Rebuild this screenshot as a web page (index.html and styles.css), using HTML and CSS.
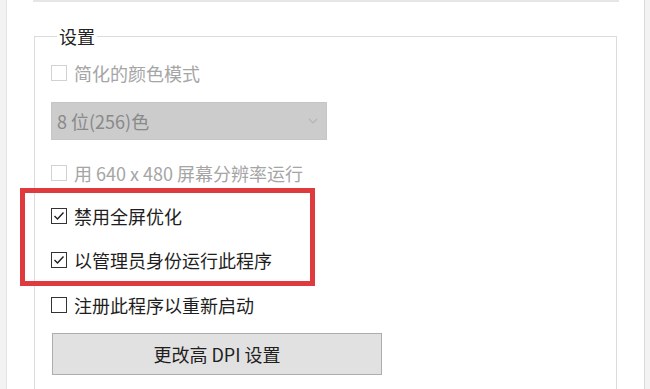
FILE: index.html
```html
<!DOCTYPE html>
<html lang="zh-CN">
<head>
<meta charset="utf-8">
<title>设置</title>
<link rel="stylesheet" href="styles.css">
</head>
<body>
<div class="window">
  <div class="prev-group"></div>
  <fieldset class="group">
    <legend class="group-title">设置</legend>

    <div class="row row-first disabled">
      <span class="box"></span>
      <span class="label">简化的颜色模式</span>
    </div>

    <div class="select">
      <span class="select-text">8 位(256)色</span>
      <svg class="chevron" width="10" height="6" viewBox="0 0 10 6"><path d="M1 1 L5 5 L9 1" fill="none" stroke="#b4b4b4" stroke-width="1.2"/></svg>
    </div>

    <div class="row row-res disabled">
      <span class="box"></span>
      <span class="label">用 640 x 480 屏幕分辨率运行</span>
    </div>

    <div class="highlight">
      <div class="row">
        <span class="box checked"><svg width="14" height="14" viewBox="0 0 14 14"><path d="M2.5 7 L5.5 10 L11.5 3.5" fill="none" stroke="#1e1e1e" stroke-width="1.4"/></svg></span>
        <span class="label">禁用全屏优化</span>
      </div>
      <div class="row row-second">
        <span class="box checked"><svg width="14" height="14" viewBox="0 0 14 14"><path d="M2.5 7 L5.5 10 L11.5 3.5" fill="none" stroke="#1e1e1e" stroke-width="1.4"/></svg></span>
        <span class="label">以管理员身份运行此程序</span>
      </div>
    </div>

    <div class="row row-restart">
      <span class="box"></span>
      <span class="label">注册此程序以重新启动</span>
    </div>

    <button class="dpi-button" type="button">更改高 DPI 设置</button>
  </fieldset>
</div>
</body>
</html>
```

FILE: styles.css
```css
html, body {
  margin: 0;
  padding: 0;
  height: 100%;
}

body {
  background: #f3f3f3;
  font-family: "Noto Sans CJK SC", "Microsoft YaHei", "Noto Sans", sans-serif;
  color: #1e1e1e;
  overflow: hidden;
}

.window {
  margin: 0 5px 0 6px;
  min-height: 100%;
  box-sizing: border-box;
  background: #ffffff;
  border-left: 1px solid #e4e4e4;
  border-right: 1px solid #dadada;
  padding: 0 27px 0 27px;
}

.prev-group {
  height: 0;
  border-bottom: 2px solid #e6e6e6;
  margin-right: -2px;
  margin-left: -1px;
}

.group {
  margin: 22px 0 0 0;
  border: 1px solid #dcdcdc;
  padding: 0 0 30px 16px;
  min-width: 0;
}

.group-title {
  margin-left: 6px;
  padding: 0 2px;
  font-size: 18px;
  line-height: 24px;
  color: #222222;
}

.row {
  display: flex;
  align-items: center;
  height: 24px;
  font-size: 18px;
  line-height: 24px;
  white-space: nowrap;
}

.row-first { margin-top: 13px; }
.row-res { margin-top: 21px; }
.row-second { margin-top: 20px; }
.row-restart { margin-top: 7px; }

.box {
  width: 14px;
  height: 14px;
  border: 1px solid #333333;
  background: #ffffff;
  flex: none;
  display: flex;
  align-items: center;
  justify-content: center;
}

.label {
  margin-left: 7px;
}

.disabled .box {
  border-color: #d2d2d2;
}

.disabled .label {
  color: #a5a5a5;
}

.select {
  margin-top: 17px;
  width: 276px;
  height: 38px;
  box-sizing: border-box;
  background: #cccccc;
  border: 1px solid #c6c6c6;
  display: flex;
  align-items: center;
  justify-content: space-between;
  padding: 0 8px 0 5px;
  font-size: 18px;
  color: #898989;
}

.chevron {
  display: block;
}

.highlight {
  margin: 3px 0 0 -31px;
  width: 295px;
  box-sizing: border-box;
  border: 5px solid #df3a3d;
  padding: 11px 0 9px 26px;
}

.dpi-button {
  display: block;
  margin-top: 16px;
  margin-left: 1px;
  width: 330px;
  height: 42px;
  background: #e1e1e1;
  border: 1px solid #adadad;
  font-family: inherit;
  font-size: 18px;
  color: #1e1e1e;
  padding: 0;
}
```
